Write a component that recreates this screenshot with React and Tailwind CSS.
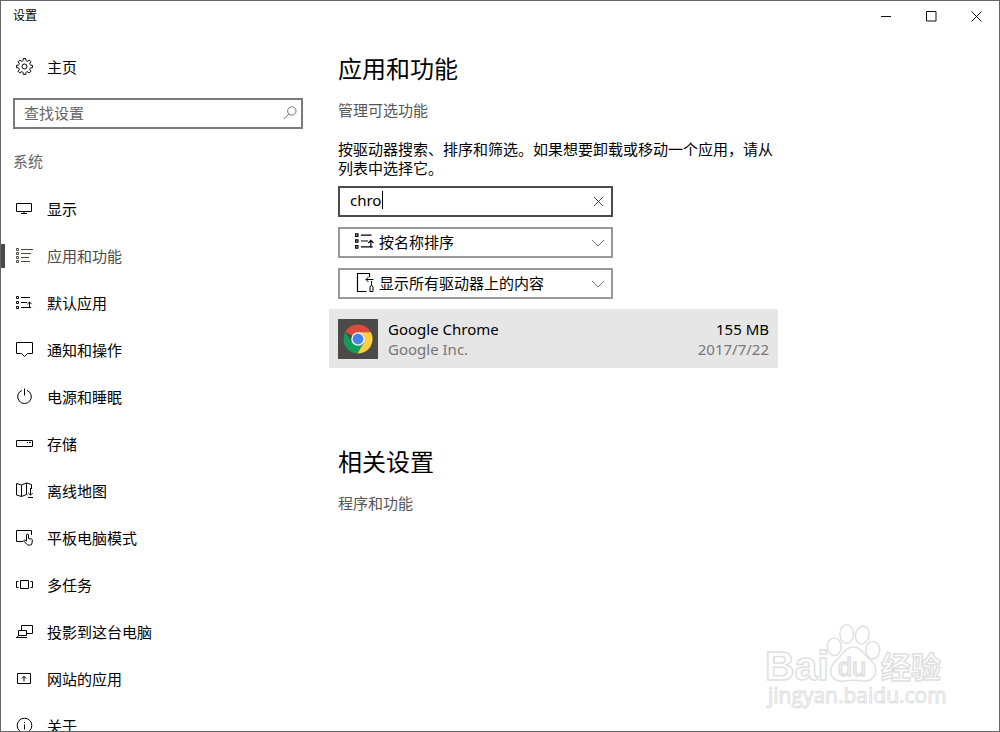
import React, { useState } from "react";

function Icon({ children }) {
  return (
    <svg
      className="w-[17px] h-[17px] shrink-0"
      viewBox="0 0 17 17"
      fill="none"
      stroke="currentColor"
      strokeWidth="1"
      aria-hidden="true"
    >
      {children}
    </svg>
  );
}

const GearIcon = () => {
  const teeth = [];
  for (let i = 0; i < 8; i++) {
    const at = (deg, r) => {
      const a = ((i * 45 + deg) * Math.PI) / 180;
      return `${(8.5 + r * Math.cos(a)).toFixed(2)} ${(8.5 + r * Math.sin(a)).toFixed(2)}`;
    };
    teeth.push(`${at(-9, 8)} L${at(9, 8)} L${at(13, 6.3)} L${at(22.5, 5.7)} L${at(32, 6.3)}`);
  }
  return (
    <Icon>
      <path d={`M${teeth.join(" L")}Z`} strokeLinejoin="round" />
      <circle cx="8.5" cy="8.5" r="2.5" />
    </Icon>
  );
};

const SortIcon = () => (
  <Icon>
    <path d="M.5 2.500h2v2h-2zM.5 7.500h2v2h-2zM.5 12.500h2v2h-2z" />
    <path d="M5 3.500h9M5 8.500h6M5 13.500h10" />
    <path d="M13.500 14V8M11.300 10.200L13.500 8l2.200 2.200" />
  </Icon>
);

const DriveIcon = () => (
  <svg className="w-5 h-5" viewBox="0 0 20 20" fill="none" stroke="currentColor" aria-hidden="true">
    <path d="M14.500 4V.5H2.500v18h9" strokeWidth="1.200" />
    <path d="M18.500 6.500H11M13.500 4L11 6.500l2.500 2.500" />
    <path d="M16.500 8v4l-1.500 2v4.500h3V14l-1.500-2" />
  </svg>
);

const menu = [
  {
    name: "显示",
    icon: <Icon><path d="M.5 3.500h15v8H.5zM8 12v1.500M5 13.500h6" /></Icon>,
  },
  {
    name: "应用和功能",
    icon: (
      <Icon>
        <path d="M.5 1.500h2v2h-2zM.5 5.500h2v2h-2zM.5 9.500h2v2h-2zM.5 13.500h2v2h-2z" />
        <path d="M5 2.500h12M5 6.500h10M5 10.500h8M5 14.500h9" />
      </Icon>
    ),
  },
  { name: "默认应用", icon: <SortIcon /> },
  {
    name: "通知和操作",
    icon: <Icon><path d="M.5 1.500h16v11h-5l-3 3-3-3h-5z" /></Icon>,
  },
  {
    name: "电源和睡眠",
    icon: <Icon><path d="M6 2.400a6.800 6.800 0 1 0 5 0M8.500 .5v7" /></Icon>,
  },
  {
    name: "存储",
    icon: <Icon><path d="M.5 5.500h16v6H.5zM11 7.500h1M13 7.500h2" /></Icon>,
  },
  {
    name: "离线地图",
    icon: (
      <Icon>
        <path d="M11.500 13l-1-.5-5 2-5-1.500V1.500l5 1.500 5-2 5 1.500V7M5.500 3v11.500M10.500 1v11.500" />
        <path d="M14.500 6v7M12.300 11l2.200 2.200 2.200-2.200M12 15.500h5" />
      </Icon>
    ),
  },
  {
    name: "平板电脑模式",
    icon: (
      <Icon>
        <path d="M7 12.500H.5v-11h15V6" />
        <path d="M10.500 12V6.100a1 1 0 0 1 2 0V9.500l3 .6c.8.200 1 .6.900 1.400l-.6 3.500c-.2.700-.5 1-1.200 1h-2.400c-.6 0-1-.200-1.400-.7L7.700 12c-.2-.9.800-1.300 1.500-.8l1.300 1" />
      </Icon>
    ),
  },
  {
    name: "多任务",
    icon: <Icon><path d="M4.500 4.500h8v8h-8zM2.500 5.500h-2v6h2M14.500 5.500h2v6h-2" /></Icon>,
  },
  {
    name: "投影到这台电脑",
    icon: (
      <Icon>
        <path d="M5.500 7V2.500h11v8h-6" />
        <path d="M2.500 7.500h8v5h-8zM0 14.500h11M2.500 12.500l-1.500 2" />
      </Icon>
    ),
  },
  {
    name: "网站的应用",
    icon: <Icon><path d="M1.500 3.500h13v10h-13zM8 11.500V6.500M5.800 8.500L8 6.300l2.200 2.200" /></Icon>,
  },
  {
    name: "关于",
    icon: <Icon><circle cx="8.500" cy="8.500" r="7.300" /><path d="M8.500 7.500v5M8.500 5v1.200" /></Icon>,
  },
];

const Chevron = () => (
  <svg
    className="absolute right-2 top-1/2 -translate-y-1/2 w-[14px] h-[8px] text-[#777] pointer-events-none"
    viewBox="0 0 14 8"
    fill="none"
    stroke="currentColor"
    aria-hidden="true"
  >
    <path d="M1 1l6 6 6-6" />
  </svg>
);

function ChromeLogo() {
  return (
    <svg className="w-10 h-10 bg-[#4c4a48] shrink-0" viewBox="0 0 40 40" aria-hidden="true">
      <path d="M20 20L7.400 12.700A14.500 14.500 0 0 1 32.600 12.700L33 13.200H20z" fill="#dd4b3e" />
      <path d="M32.900 13.200A14.500 14.500 0 0 1 19.600 34.500L20 30 25.900 23.400 26 16.600 20 13.200z" fill="#ffcd40" />
      <path d="M7.400 12.700A14.500 14.500 0 0 0 19.600 34.500L25.900 23.400 20 26.800 14.100 23.400z" fill="#109d58" />
      <circle cx="20" cy="20" r="6.800" fill="#f4f4f4" />
      <circle cx="20" cy="20" r="5.400" fill="#4285f4" />
    </svg>
  );
}

function Watermark() {
  return (
    <svg
      className="absolute right-[50px] bottom-[16px] w-[190px] h-[94px] pointer-events-none"
      viewBox="0 0 190 94"
      fill="#fff"
      stroke="#e0e0e0"
      strokeWidth="1.500"
      aria-hidden="true"
    >
      <text x="6" y="59" fontSize="41" fontFamily="Liberation Sans, sans-serif" fontWeight="700">Bai</text>
      <text x="122" y="57" fontSize="30" fontFamily="Noto Sans CJK SC, sans-serif" fontWeight="700">经验</text>
      <ellipse cx="75.300" cy="25.700" rx="7" ry="8.800" />
      <ellipse cx="87.700" cy="13" rx="6.800" ry="9.300" />
      <ellipse cx="103.300" cy="14" rx="6.800" ry="9" transform="rotate(12 103.300 14)" />
      <ellipse cx="113.700" cy="29.300" rx="7" ry="8.800" />
      <path d="M94.300 26c8 0 10 7 15 11s8 8 7.400 13c-1 9-8 11-14 10-6-1-11-1-17 0s-14-1-14-10c0-6 4-9 8-13s7-11 14.600-11z" />
      <text x="79" y="55" fontSize="25" fontFamily="Liberation Sans, sans-serif">du</text>
      <text x="9" y="82" fontSize="21" strokeWidth="1" fontFamily="Open Sans, sans-serif">jingyan.baidu.com</text>
    </svg>
  );
}

function App() {
  const [active, setActive] = useState("应用和功能");
  const [search, setSearch] = useState("");
  const [filter, setFilter] = useState("chro");

  return (
    <div className="relative flex flex-col h-screen overflow-hidden bg-white border border-[#666] text-black text-[15px] leading-5 font-['Noto_Sans','Noto_Sans_CJK_SC',sans-serif]">
      <header className="flex shrink-0 items-center justify-between h-[30px] pl-3">
        <span className="text-xs">设置</span>
        <div className="flex">
          <button type="button" aria-label="最小化" className="flex w-[45px] h-[30px] items-center justify-center">
            <svg className="w-[11px] h-[11px]" viewBox="0 0 11 11" stroke="#111"><path d="M0 5.500h10" /></svg>
          </button>
          <button type="button" aria-label="最大化" className="flex w-[45px] h-[30px] items-center justify-center">
            <svg className="w-[11px] h-[11px]" viewBox="0 0 11 11" fill="none" stroke="#111"><path d="M.5.5h9.500v9.500H.5z" /></svg>
          </button>
          <button type="button" aria-label="关闭" className="flex w-[45px] h-[30px] items-center justify-center">
            <svg className="w-[11px] h-[11px]" viewBox="0 0 11 11" stroke="#111"><path d="M.5.5l10 10M10.500.5l-10 10" /></svg>
          </button>
        </div>
      </header>

      <div className="flex min-h-0 flex-1">
        <aside className="w-[302px] shrink-0 pt-3">
          <a href="#home" className="flex h-[47px] items-center gap-[14px] pl-[15px]">
            <GearIcon />
            主页
          </a>
          <div className="relative mt-2 ml-3">
            <input
              type="text"
              aria-label="查找设置"
              placeholder="查找设置"
              value={search}
              onChange={(e) => setSearch(e.target.value)}
              className="block w-full h-[31px] border-2 border-[#7a7a7a] pl-[9px] pr-8 pb-0.5 outline-none placeholder:text-[#666]"
            />
            <svg
              className="absolute right-[6px] top-2 w-[14px] h-[14px]"
              viewBox="0 0 14 14"
              fill="none"
              stroke="#777"
              aria-hidden="true"
            >
              <circle cx="8.800" cy="5" r="4.200" />
              <path d="M5.800 8L.8 13" />
            </svg>
          </div>
          <h2 className="mt-[22px] pl-3 text-[#666]">系统</h2>
          <nav className="mt-3.5">
            {menu.map((item) => {
              const on = item.name === active;
              return (
                <a
                  key={item.name}
                  href={`#${item.name}`}
                  onClick={() => setActive(item.name)}
                  className={`flex h-[47px] items-center ${on ? "text-[#4c4a48]" : ""}`}
                >
                  <span className={`w-1 h-6 mr-[11px] ${on ? "bg-[#4c4a48]" : ""}`}></span>
                  {item.icon}
                  <span className="pl-[14px]">{item.name}</span>
                </a>
              );
            })}
          </nav>
        </aside>

        <main className="flex-1 min-w-0 pt-[22px] pl-[26px]">
          <div className="max-w-[449px]">
            <section className="pl-[9px]">
              <h1 className="text-2xl leading-8">应用和功能</h1>
              <a href="#optional" className="block mt-[15px] text-[#555]">管理可选功能</a>
              <p className="mt-5 leading-[19px]">
                按驱动器搜索、排序和筛选。如果想要卸载或移动一个应用，请从列表中选择它。
              </p>
              <div className="flex flex-col gap-[10px] mt-2 max-w-[275px]">
                <div className="relative">
                  <input
                    type="text"
                    aria-label="搜索应用"
                    value={filter}
                    onChange={(e) => setFilter(e.target.value)}
                    className="block w-full h-[31px] border-2 border-[#4c4a48] pl-[10px] pr-8 pb-1 outline-none caret-transparent"
                  />
                  {filter === "chro" && (
                    <span className="absolute left-11 top-[5px] w-px h-[18px] bg-black"></span>
                  )}
                  <button
                    type="button"
                    aria-label="清除"
                    onClick={() => setFilter("")}
                    className="absolute right-[9px] top-[10px]"
                  >
                    <svg className="block w-[11px] h-[11px]" viewBox="0 0 11 11" stroke="#444"><path d="M1 1l9 9M10 1l-9 9" /></svg>
                  </button>
                </div>
                <div className="relative">
                  <select
                    aria-label="排序方式"
                    className="block w-full h-[31px] appearance-none border-2 border-[#999] bg-white pl-[39px] pb-0.5 outline-none"
                  >
                    <option>按名称排序</option>
                  </select>
                  <span className="absolute left-[17px] top-1 pointer-events-none [&>svg]:w-5 [&>svg]:h-5">
                    <SortIcon />
                  </span>
                  <Chevron />
                </div>
                <div className="relative">
                  <select
                    aria-label="驱动器"
                    className="block w-full h-[31px] appearance-none border-2 border-[#999] bg-white pl-[39px] pb-0.5 outline-none"
                  >
                    <option>显示所有驱动器上的内容</option>
                  </select>
                  <span className="absolute left-[17px] top-[5px] pointer-events-none">
                    <DriveIcon />
                  </span>
                  <Chevron />
                </div>
              </div>
            </section>

            <div className="flex items-center h-[59px] mt-[10px] px-[9px] bg-[#e6e6e6]">
              <ChromeLogo />
              <div className="flex-1 pl-[10px]">
                <p>Google Chrome</p>
                <p className="text-[#767676]">Google Inc.</p>
              </div>
              <div className="text-right">
                <p>155 MB</p>
                <p className="text-[#767676]">2017/7/22</p>
              </div>
            </div>

            <section className="mt-[78px] pl-[9px]">
              <h1 className="text-2xl leading-8">相关设置</h1>
              <a href="#programs" className="block mt-[15px] text-[#555]">程序和功能</a>
            </section>
          </div>
        </main>
      </div>

      <Watermark />
    </div>
  );
}

export default App;
